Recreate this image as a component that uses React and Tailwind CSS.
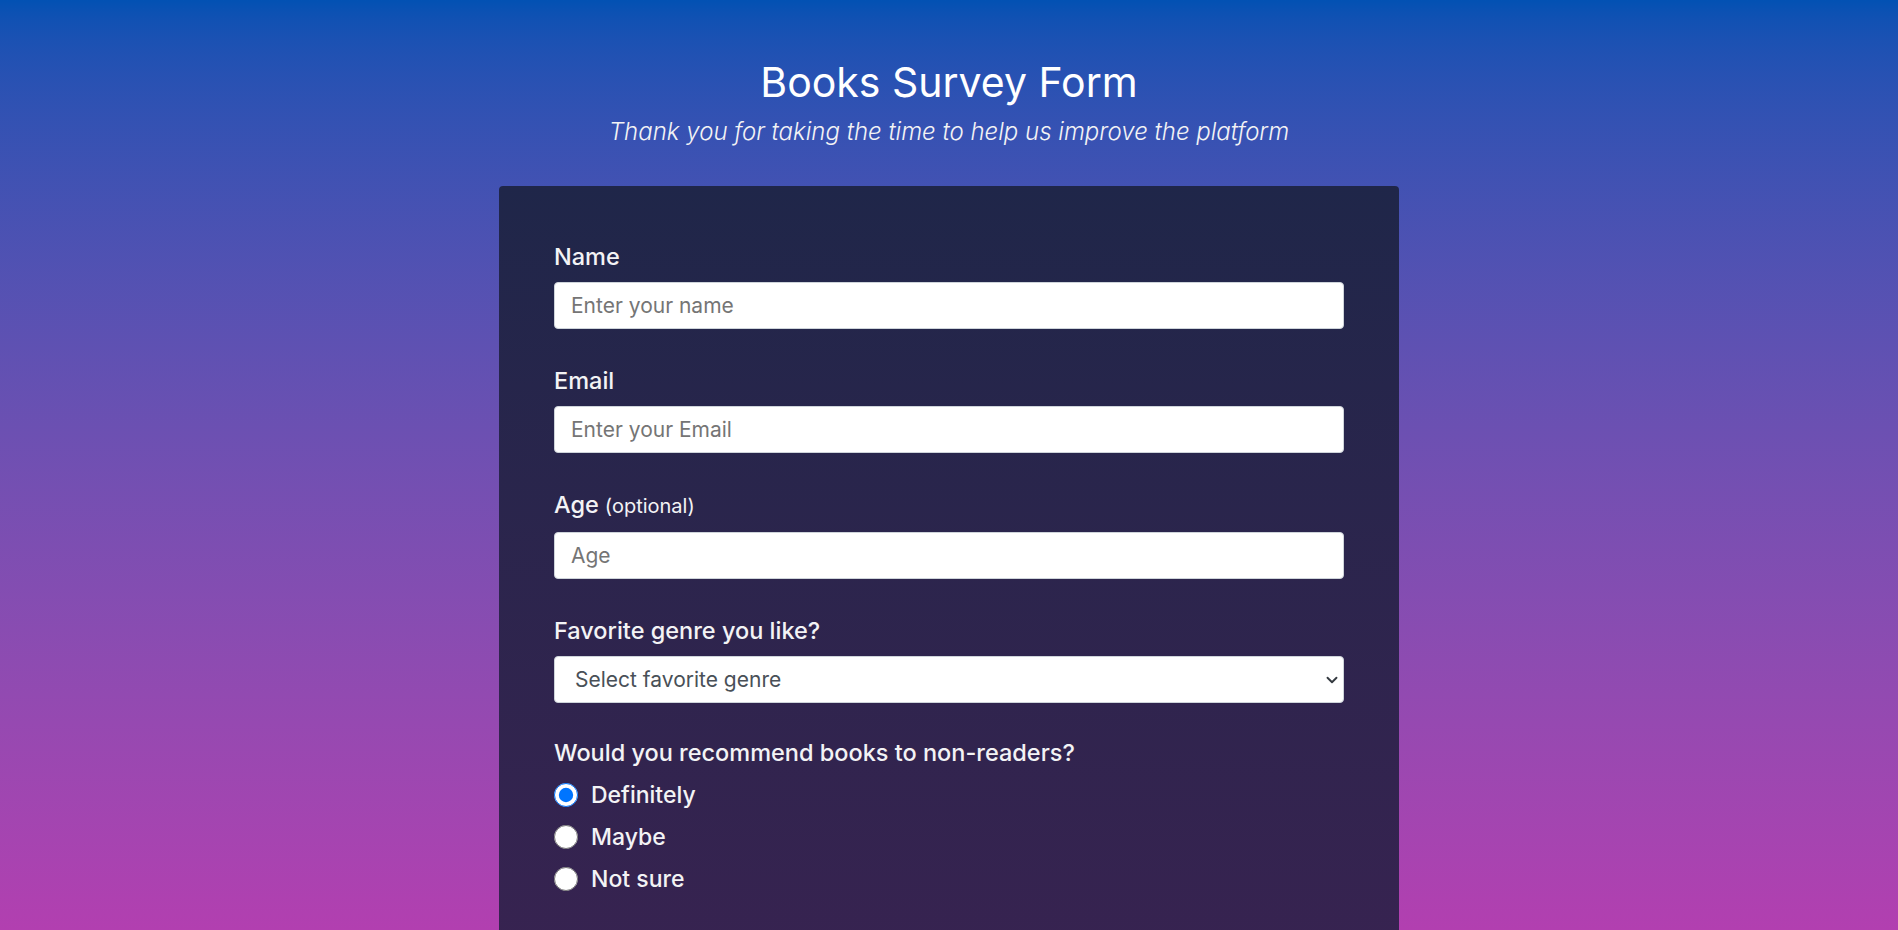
import { FiChevronDown } from 'react-icons/fi';

const textFields = [
    { id: 'name', label: 'Name', type: 'text', placeholder: 'Enter your name' },
    { id: 'email', label: 'Email', type: 'email', placeholder: 'Enter your Email' },
    { id: 'age', label: 'Age', hint: '(optional)', type: 'number', placeholder: 'Age' },
];

const choices = ['Definitely', 'Maybe', 'Not sure'];

const App = () => {
    return (
        <div className="h-screen overflow-hidden bg-gradient-to-b from-[#0251b3] to-[#b23fb0] text-[#f3f3f5] font-['Inter','Noto_Sans',sans-serif]">
            {/* Header */}
            <header className="pt-[55px] text-center">
                <h1 className="text-[41px] leading-[54px] font-normal text-white">Books Survey Form</h1>
                <p className="mt-[5px] text-[24px] leading-[36px] font-light italic">
                    Thank you for taking the time to help us improve the platform
                </p>
            </header>

            {/* Form card */}
            <form className="mx-auto mt-[36px] w-[900px] rounded-[4px] bg-gradient-to-b from-[#1f2649] to-[#3b2252] px-[55px] pt-[54px] pb-[200px] min-h-[900px]">
                {textFields.map(({ id, label, hint, type, placeholder }) => (
                    <div key={id} className="mb-[35px]">
                        <label htmlFor={id} className="block text-[23.5px] leading-[33px] font-medium mb-[9px]">
                            {label}
                            {hint && <span className="ml-[6px] text-[20px] font-normal">{hint}</span>}
                        </label>
                        <input
                            id={id}
                            type={type}
                            placeholder={placeholder}
                            className="block w-full h-[47px] rounded-[4px] border border-[#ced4da] bg-white px-[16px] text-[21px] text-[#495057] placeholder:text-[#757575] outline-none"
                        />
                    </div>
                ))}

                <div className="mb-[33px]">
                    <label htmlFor="genre" className="block text-[23.5px] leading-[33px] font-medium mb-[9px]">
                        Favorite genre you like?
                    </label>
                    <div className="relative">
                        <select
                            id="genre"
                            defaultValue=""
                            className="block w-full h-[47px] appearance-none rounded-[4px] border border-[#ced4da] bg-white pl-[20px] pr-10 text-[21px] text-[#495057] outline-none"
                        >
                            <option value="" disabled>Select favorite genre</option>
                            <option>Fiction</option>
                            <option>Non-fiction</option>
                            <option>Poetry</option>
                        </select>
                        <FiChevronDown className="absolute right-[3px] top-1/2 -translate-y-1/2 w-[18px] h-[18px] text-[#343a40] stroke-[2.5] pointer-events-none" />
                    </div>
                </div>

                <div>
                    <p className="text-[23.5px] leading-[33px] font-medium mb-[14px]">Would you recommend books to non-readers?</p>
                    <div className="flex flex-col gap-[18px]">
                        {choices.map((c, i) => (
                            <label key={c} className="flex items-center gap-[13px] text-[23px] leading-[24px] font-medium">
                                <input
                                    type="radio"
                                    name="recommend"
                                    defaultChecked={i === 0}
                                    className="m-0 w-[24px] h-[24px] accent-[#0075ff]"
                                />
                                {c}
                            </label>
                        ))}
                    </div>
                </div>
            </form>
        </div>
    );
};

export default App;
